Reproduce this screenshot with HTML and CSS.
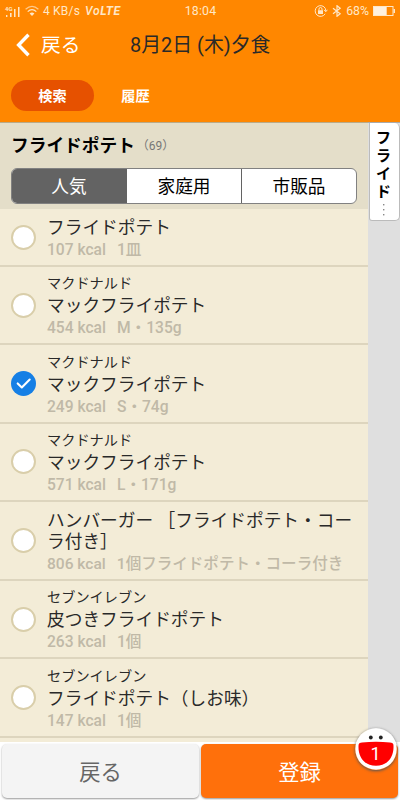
FILE: index.html
```html
<!DOCTYPE html>
<html lang="ja">
<head>
<meta charset="utf-8">
<title>フライドポテト</title>
<link rel="stylesheet" href="styles.css">
</head>
<body>
<div class="app">
  <header class="header">
    <div class="status">
      <div class="status-left">
        <svg class="signal" width="17" height="14" viewBox="0 0 17 14"><g fill="#ffe7c7"><rect x="1" y="10" width="1.4" height="2"/><rect x="5" y="8" width="1.6" height="4"/><rect x="9" y="4" width="1.5" height="8"/><rect x="13" y="2" width="1.5" height="10"/></g><text class="network" x="0" y="5.5">4G</text></svg>
        <svg class="wifi" width="14" height="12" viewBox="0 0 14 12" fill="none" stroke="#ffe7c7" stroke-width="1.2"><path d="M.6 4.2Q7-1.4 13.4 4.2" opacity=".7"/><path d="M2.7 6.6Q7 2.8 11.3 6.6"/><path d="M4.6 8.5Q7 6.7 9.4 8.5L7 11z" fill="#ffe7c7" stroke="none"/></svg>
        <span class="speed">4 KB/s</span>
        <span class="volte">Vo<b>LTE</b></span>
      </div>
      <span class="clock">18:04</span>
      <div class="status-right">
        <svg width="14" height="12" viewBox="0 0 14 12" fill="none" stroke="#ffe7c7"><path d="M11.2 8.8A5.4 5.4 0 1 1 11.4 3.6L11.8 6M10 4.8l1.8 2 1.5-2"/><rect x="4" y="5.2" width="5" height="3.8" fill="#ffe7c7" stroke="none"/><path d="M5 5V4a1.5 1.5 0 0 1 3 0v1"/></svg>
        <svg width="10" height="12" viewBox="0 0 10 12" fill="none" stroke="#ffe7c7" stroke-width="1.2"><path d="M1 3.2L8.2 8.8L5 11.3V.7L8.2 3.2L1 8.8"/></svg>
        <span class="percent">68%</span>
        <svg width="23" height="10" viewBox="0 0 23 10"><rect x=".5" y=".5" width="19.5" height="9" fill="none" stroke="#ffe7c7"/><rect x="1" y="1" width="12.7" height="8" fill="#fff1df"/><rect x="20.5" y="3" width="1.5" height="4" fill="#ffe7c7"/></svg>
      </div>
    </div>
    <div class="nav">
      <svg class="chevron" width="16" height="24" viewBox="0 0 16 24"><path d="M12.5 1.7L2.6 12L12.5 22.3" fill="none" stroke="#fff" stroke-width="3.4"/></svg>
      <span class="nav-back">戻る</span>
      <h1 class="nav-title">8月2日 (木)夕食</h1>
    </div>
    <div class="tabs"><span class="tab tab-active">検索</span><span class="tab">履歴</span></div>
  </header>
  <div class="content">
    <main class="main">
      <section class="filter">
        <div class="heading"><h2>フライドポテト</h2><span class="count">（69）</span></div>
        <div class="segments"><span class="segment segment-active">人気</span><span class="segment">家庭用</span><span class="segment">市販品</span></div>
      </section>
      <ul class="list">
        <li class="item item-short"><i class="radio"></i><div class="text"><p class="name">フライドポテト</p><p class="meta"><span>107 kcal</span><span>1皿</span></p></div></li>
        <li class="item"><i class="radio"></i><div class="text"><p class="brand">マクドナルド</p><p class="name">マックフライポテト</p><p class="meta"><span>454 kcal</span><span>M・135g</span></p></div></li>
        <li class="item"><i class="radio radio-on"><svg width="25" height="25" viewBox="0 0 25 25"><path d="M6.7 12.4L10.8 16.4L18.7 8.5" fill="none" stroke="#fff" stroke-width="2.1" stroke-linecap="round" stroke-linejoin="round"/></svg></i><div class="text"><p class="brand">マクドナルド</p><p class="name">マックフライポテト</p><p class="meta"><span>249 kcal</span><span>S・74g</span></p></div></li>
        <li class="item"><i class="radio"></i><div class="text"><p class="brand">マクドナルド</p><p class="name">マックフライポテト</p><p class="meta"><span>571 kcal</span><span>L・171g</span></p></div></li>
        <li class="item item-long"><i class="radio"></i><div class="text"><p class="name">ハンバーガー ［フライドポテト・コー<br>ラ付き］</p><p class="meta"><span>806 kcal</span><span>1個フライドポテト・コーラ付き</span></p></div></li>
        <li class="item"><i class="radio"></i><div class="text"><p class="brand">セブンイレブン</p><p class="name">皮つきフライドポテト</p><p class="meta"><span>263 kcal</span><span>1個</span></p></div></li>
        <li class="item"><i class="radio"></i><div class="text"><p class="brand">セブンイレブン</p><p class="name">フライドポテト（しお味）</p><p class="meta"><span>147 kcal</span><span>1個</span></p></div></li>
      </ul>
    </main>
    <aside class="side"><div class="side-tab"><span>フ</span><span>ラ</span><span>イ</span><span>ド</span><svg width="4" height="14" viewBox="0 0 4 14" fill="#888"><rect x="1" y="1" width="1.4" height="1.4"/><rect x="1" y="6" width="1.4" height="1.4"/><rect x="1" y="11" width="1.4" height="1.4"/></svg></div></aside>
  </div>
  <footer class="footer">
    <div class="button">戻る</div>
    <div class="button button-primary">登録
      <div class="badge"><svg width="42" height="42" viewBox="0 0 42 42"><circle cx="21" cy="21" r="20.7" fill="#fff"/><circle cx="15.8" cy="9.5" r="1.9" fill="#222"/><circle cx="25.8" cy="9.5" r="1.9" fill="#222"/><path d="M3.6 16.5Q4 14.7 7 14.5Q21 12.8 35 14.5Q38 14.7 38.4 16.5C39.4 27 34 37.8 21 37.8S2.6 27 3.6 16.5z" fill="#f00"/></svg><span>1</span></div>
    </div>
  </footer>
</div>
</body>
</html>
```

FILE: styles.css
```css
* { box-sizing: border-box; }
body, h1, h2, p, ul { margin: 0; padding: 0; }
body { font-family: Roboto, "Noto Sans CJK JP", sans-serif; color: #292929; }
.app { width: 400px; height: 800px; display: flex; flex-direction: column; overflow: hidden; background: #fff; }
.header { height: 122px; flex: none; background: #ff8700; }
.status { height: 22px; display: grid; grid-template-columns: 1fr auto 1fr; align-items: center; padding: 0 4px 0 5px; color: #ffe7c7; font-size: 12px; line-height: 22px; }
.status-left, .status-right { display: flex; align-items: center; }
.status-right { justify-content: flex-end; gap: 4px; }
.signal { margin-top: 2px; overflow: visible; }
.network { font: bold 6px Roboto, sans-serif; fill: #ffe7c7; }
.wifi { margin-left: 3px; }
.speed { margin-left: 4px; letter-spacing: .2px; }
.volte { margin-left: 5px; font-style: italic; font-size: 12px; font-weight: 500; letter-spacing: .6px; }
.clock { letter-spacing: .2px; font-size: 12.3px; }
.percent { font-size: 12.3px; }
.nav { height: 47px; display: flex; align-items: center; padding-left: 16px; }
.chevron { margin-top: -2px; }
.nav-back { width: 88px; margin-left: 9px; color: #fff; font-size: 19.7px; line-height: 28px; }
.nav-title { font-size: 19.9px; font-weight: 400; line-height: 28px; margin-left: 1px; padding-top: 1px; white-space: nowrap; }
.tabs { display: flex; padding: 11px 11px 0; }
.tab { width: 83px; height: 31px; border-radius: 16px; color: #fff; font-size: 14.2px; font-weight: 700; line-height: 32px; text-align: center; }
.tab-active { background: #e65100; }
.content { flex: 1; min-height: 0; display: flex; overflow: hidden; }
.main { width: 368px; flex: none; background: #f3ecd7; }
.filter { height: 87px; padding: 10px 11px 0; background: #e4dec9; border-top: 1px solid #b9aa88; }
.heading { display: flex; align-items: center; height: 26px; color: #000; }
h2 { font-size: 17.7px; line-height: 26px; font-weight: 700; }
.count { font-size: 12px; color: #777; line-height: 26px; margin-left: 2px; }
.segments { margin-top: 9px; width: 346px; height: 36px; display: flex; border: 1px solid #818181; border-radius: 6px; overflow: hidden; background: #fff; }
.segment { flex: 1; line-height: 36px; font-size: 17.7px; text-align: center; color: #000; }
.segment + .segment { border-left: 1px solid #636363; }
.segment-active { background: #636363; color: #fff; }
.list { list-style: none; }
.item { display: flex; align-items: center; height: 78.4px; padding: 0 8px 0 11px; border-bottom: 2px solid #ddd5be; }
.item-short { height: 58px; }
.item-long { height: 78.8px; }
.radio { flex: none; width: 25px; height: 25px; margin-right: 11px; border: 2px solid #d9ceaa; border-radius: 50%; background: #fff; }
.radio-on { border: 0; background: #157fe5; }
.radio svg { display: block; }
.text { padding-top: 2px; }
.brand { font-size: 14.2px; line-height: 20px; }
.name { font-size: 17.7px; line-height: 24px; padding-top: 1px; margin-bottom: -1px; white-space: nowrap; }
.item-long .name { line-height: 21px; padding-top: 2px; margin-bottom: -2px; }
.meta { display: flex; gap: 11px; font-size: 15.6px; line-height: 22px; color: #c0b9a7; font-weight: 500; white-space: nowrap; }
.item-long .meta { padding-top: 2px; font-size: 15.55px; }
.side { flex: 1; background: #dfdfdf; border-top: 1px solid #aaa; }
.side-tab { width: 31px; height: 98px; margin-left: 1px; display: flex; flex-direction: column; align-items: center; padding: 6px 2px 0 0; background: #fff; border: 1px solid #bbb; border-top: 0; border-radius: 0 5px 5px 3px; font-size: 15px; line-height: 18px; font-weight: 700; color: #000; }
.side-tab svg { margin-top: 2px; }
.footer { height: 58px; flex: none; display: flex; gap: 2px; padding: 2px; background: #fff; }
.button { width: 197px; height: 54px; border-radius: 5px; background: #f4f4f4; color: #666; font-size: 21.3px; line-height: 57px; text-align: center; box-shadow: 0 1px 2px #999; position: relative; }
.button-primary { background: #ff700b; color: #fff; }
.badge { position: absolute; right: 1px; top: -16px; width: 42px; height: 42px; border-radius: 50%; box-shadow: 0 1px 3px #555; }
.badge svg { display: block; }
.badge span { position: absolute; left: 0; top: 13px; width: 41px; font-size: 18px; line-height: 25px; }
```
